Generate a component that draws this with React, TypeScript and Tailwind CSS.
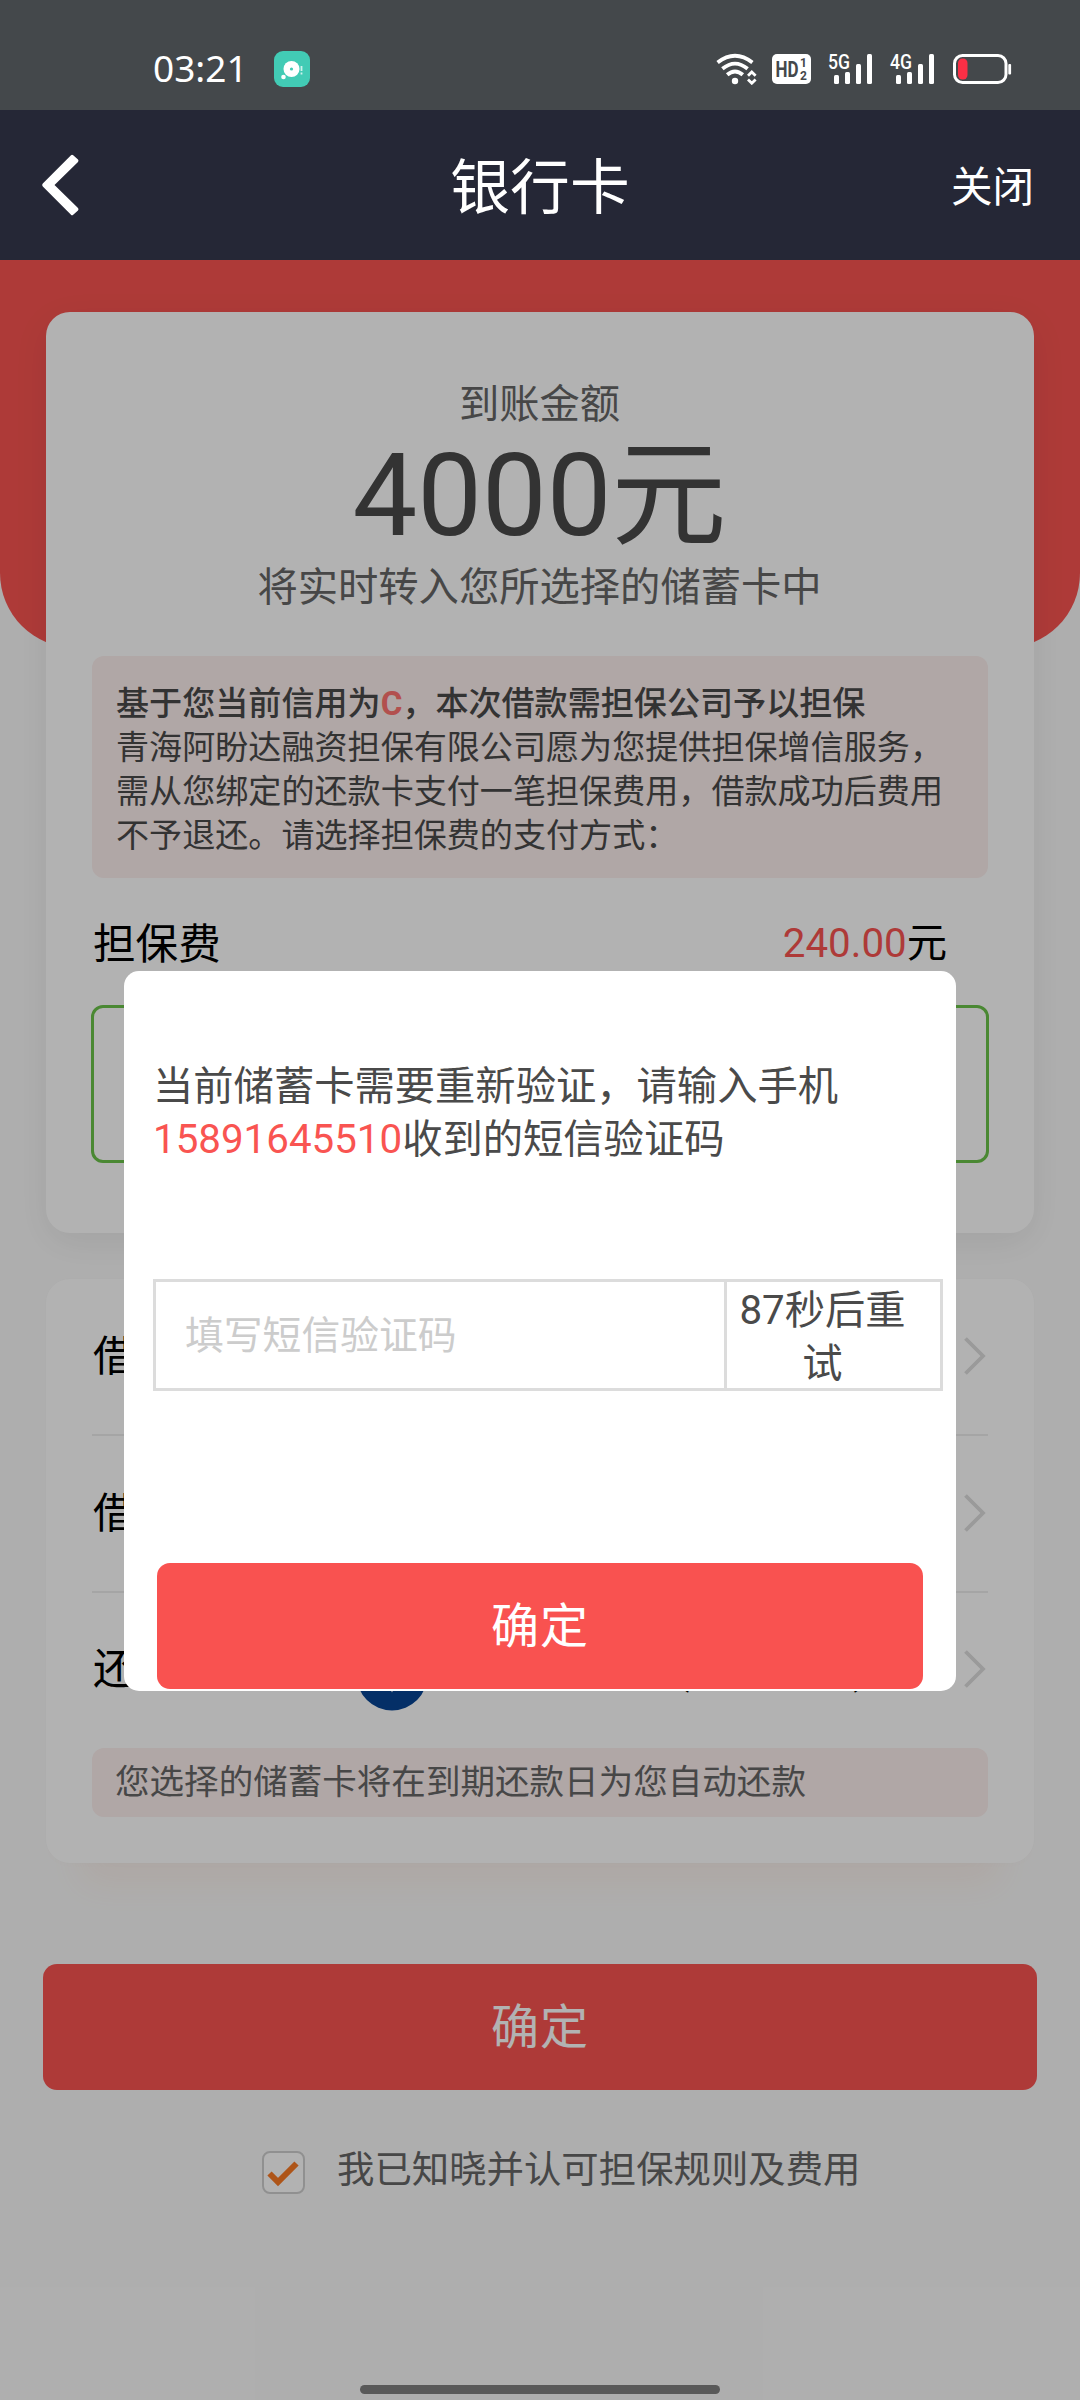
import { type ReactNode } from 'react';
import clsx from 'clsx';

const FONT = "font-['Roboto','Noto_Sans_CJK_SC',sans-serif]";

const PHONE = '15891645510';

const NOTICE_LINES = [
  '青海阿盼达融资担保有限公司愿为您提供担保增信服务，',
  '需从您绑定的还款卡支付一笔担保费用，借款成功后费用',
  '不予退还。请选择担保费的支付方式：',
];

const WifiIcon = () => (
  <svg viewBox="0 0 41 32" className="w-[41px] h-[32px]" fill="none" aria-hidden="true">
    <g stroke="#fff" strokeWidth="3.8">
      <path d="M1.6 9.6 Q19 -4 36.4 9.6" />
      <path d="M6.4 15.8 Q19 5.4 31.6 15.8" />
      <path d="M11.2 21.8 Q19 15 26.8 21.8" />
    </g>
    <circle cx="19" cy="28" r="3.2" fill="#fff" />
    <path d="M32 22.8 L35.8 19 L39.6 22.8 M32 26.4 L35.8 30.2 L39.6 26.4" stroke="#fff" strokeWidth="2.8" />
  </svg>
);

const HdIcon = () => (
  <svg viewBox="0 0 39 30" className="w-[39px] h-[30px]" aria-hidden="true">
    <rect width="39" height="30" rx="5" fill="#fff" />
    <g fill="#44484b" className="font-['Roboto',sans-serif] font-bold">
      <text transform="translate(3.6 23) scale(0.79 1)" fontSize="21.5">HD</text>
      <text x="28" y="13" fontSize="12">1</text>
      <text x="28" y="26.2" fontSize="12">2</text>
    </g>
  </svg>
);

const SignalIcon = ({ label }: { label: string }) => (
  <svg viewBox="-2 -6 48 42" className="w-[48px] h-[42px]" fill="#fff" aria-hidden="true">
    <text
      x="0"
      y="15"
      fontSize="20"
      textLength="22"
      lengthAdjust="spacingAndGlyphs"
      className="font-['Roboto',sans-serif] font-medium"
    >
      {label}
    </text>
    <rect x="6" y="21" width="5" height="9" rx="1.5" />
    <rect x="17" y="18" width="5" height="12" rx="1.5" />
    <rect x="28" y="10" width="5" height="20" rx="1.5" />
    <rect x="39" y="0" width="5" height="30" rx="1.5" />
  </svg>
);

const BatteryIcon = () => (
  <svg viewBox="0 0 59 30" className="w-[59px] h-[30px]" fill="none" aria-hidden="true">
    <rect x="1.5" y="1.5" width="51.5" height="27" rx="8" stroke="#fff" strokeWidth="3" />
    <rect x="5" y="4.5" width="9.5" height="21" rx="4.5" fill="#fa2f45" />
    <rect x="55.3" y="10" width="2.8" height="10.5" rx="1" fill="#fff" />
  </svg>
);

const ChevronRight = () => (
  <svg viewBox="0 0 24 42" className="w-6 h-[42px]" fill="none" aria-hidden="true">
    <path d="M1.5 2.5 L19 20 L1.5 37.5" stroke="#dddddd" strokeWidth="3.8" />
  </svg>
);

function StatusBar() {
  return (
    <div className="flex items-center h-[110px] pt-7 pl-[153px] pr-[68px] bg-[#44484b] text-white shrink-0">
      <span className="w-[121px] pb-[4px] font-['Noto_Sans',sans-serif] text-[37px] leading-none">03:21</span>
      <svg viewBox="0 0 36 36" className="size-9" aria-hidden="true">
        <rect width="36" height="36" rx="9" fill="#42cbb5" />
        <circle cx="17.5" cy="18" r="8" fill="#fff" />
        <circle cx="17.5" cy="18" r="1.6" fill="#42cbb5" />
        <circle cx="9.5" cy="26" r="2.3" fill="#fff" />
        <path d="M27.5 15 V20 M27.5 21.5 V23.5" stroke="#fff" strokeOpacity="0.75" strokeWidth="1.8" />
      </svg>
      <div className="flex items-center ml-auto">
        <WifiIcon />
        <div className="ml-[15px]"><HdIcon /></div>
        <div className="ml-[15px]"><SignalIcon label="5G" /></div>
        <div className="ml-[14px]"><SignalIcon label="4G" /></div>
        <div className="ml-[17px]"><BatteryIcon /></div>
      </div>
    </div>
  );
}

function Header() {
  return (
    <header className="flex items-center justify-between h-[150px] pl-[41px] pr-[46px] bg-[#252736] text-white shrink-0">
      <button type="button" aria-label="返回" className="w-[85px]">
        <svg viewBox="0 0 40 64" className="w-10 h-16" fill="none" aria-hidden="true">
          <path
            d="M30 2.2 Q31 1.2 32.2 2.2 L37 6.6 Q38 7.8 37 9 L13.5 32 L37 55 Q38 56.2 37 57.4 L32.2 61.8 Q31 62.8 30 61.8 L1.8 33.6 Q0.4 32 1.8 30.4 Z"
            fill="#fff"
          />
        </svg>
      </button>
      <h1 className="text-[59.8px] leading-[72px] pt-[7px] pl-[5px]">银行卡</h1>
      <button type="button" className="w-[85px] pt-[5px] text-[41.5px] leading-[50px] text-right">关闭</button>
    </header>
  );
}

function Row({ label, last, children }: { label: string; last?: boolean; children?: ReactNode }) {
  return (
    <div
      className={clsx(
        'flex items-center text-[42.6px] text-black',
        last ? 'h-[155px] pb-px' : 'h-[157px] border-b-2 border-[#ededed]'
      )}
    >
      <span className="w-[265px] pl-px">{label}</span>
      {children}
      <div className="ml-auto"><ChevronRight /></div>
    </div>
  );
}

function VerifyDialog() {
  return (
    <div role="dialog" className="flex flex-col w-[832px] h-[720px] pt-[89px] rounded-[15px] bg-white">
      <p className="px-[29px] text-[40.3px] leading-[53px] text-[#4a4a4a]">
        当前储蓄卡需要重新验证，请输入手机
        <br />
        <span className="text-[#f95451]">{PHONE}</span>收到的短信验证码
      </p>
      <div className="flex ml-[29px] mt-[113px] w-[790px] h-[112px] border-[3px] border-[#dcdcdc] shrink-0">
        <div className="flex items-center w-[568px] pt-[3px] pl-[29px] text-[38.8px] text-[#cccccc]">填写短信验证码</div>
        <div className="flex-1 border-l-[3px] border-[#dcdcdc] pl-[5px] pr-[27px] pt-[3px] text-center text-[40.3px] leading-[52.5px] text-[#4a4a4a]">
          87秒后重
          <br />试
        </div>
      </div>
      <button
        type="button"
        className="mt-[172px] mx-[33px] pt-px h-[126px] rounded-[13px] bg-[#f95250] text-[48px] tracking-[1px] text-white"
      >
        确定
      </button>
    </div>
  );
}

export default function App() {
  return (
    <div className={clsx(FONT, 'relative flex flex-col w-[1080px] h-[2400px] overflow-hidden bg-[#fafafa]')}>
      <StatusBar />
      <Header />

      <main className="relative flex flex-col flex-1 pt-[52px] pb-[6px]">
        {/* red backdrop behind the first card */}
        <div className="absolute inset-x-0 top-0 h-[388px] rounded-b-[75px] bg-[#f95451]" />

        <section className="relative mx-[46px] h-[921px] pt-[67px] pl-[46px] pr-[46px] rounded-[24px] bg-white shadow-[0_10px_36px_rgba(0,0,0,0.07)] shrink-0">
          <div className="pr-px text-center text-[#666666]">
            <p className="text-[40.3px] leading-[52px]">到账金额</p>
            <p className="pt-1 text-[115.2px] leading-[122px] text-[#4a4a4a]">4000元</p>
            <p className="mt-[5px] text-[40.3px] leading-[52px]">将实时转入您所选择的储蓄卡中</p>
          </div>

          <div className="mt-[42px] h-[222px] pt-[26px] px-6 rounded-[12px] bg-[#fdefee] text-[33.1px] leading-[44px] text-[#4a4a4a]">
            <p className="font-medium">
              基于您当前信用为<span className="font-bold text-[#ff7370]">C</span>，本次借款需担保公司予以担保
            </p>
            {NOTICE_LINES.map((line) => (
              <p key={line} className="-mr-6 whitespace-nowrap">{line}</p>
            ))}
          </div>

          <div className="flex items-center justify-between mt-[41px] pl-px pr-[41px] h-[50px] leading-[50px] text-black">
            <span className="text-[42.6px]">担保费</span>
            <span className="text-[40.3px]">
              <span className="text-[#f95451]">240.00</span>元
            </span>
          </div>

          <div className="mt-9 -mx-px h-[158px] rounded-[12px] border-[3px] border-[#6bc34a]" />
        </section>

        <section className="relative mx-[46px] mt-[46px] h-[584px] px-[46px] rounded-[24px] bg-white shadow-[0_0_10px_rgba(0,0,0,0.02),0_56px_36px_-34px_rgba(240,140,90,0.09)] shrink-0">
          <Row label="借款" />
          <Row label="借款" />
          <Row label="还款" last>
            <svg viewBox="0 0 72 72" className="mt-[10px] -ml-px size-[72px]" aria-hidden="true">
              <circle cx="36" cy="36" r="35.5" fill="#064494" />
              <path d="M33 48 L39 48 L36 53.5 Z" fill="#fff" />
            </svg>
            <div className="flex justify-between ml-[247px] w-[193px] pb-[3px]">
              <span>(</span>
              <span>)</span>
            </div>
          </Row>
          <p className="h-[69px] px-[23px] rounded-[12px] bg-[#fdefee] text-[34.55px] leading-[68px] text-[#666666]">
            您选择的储蓄卡将在到期还款日为您自动还款
          </p>
        </section>

        <button
          type="button"
          className="relative mx-[43px] mt-[101px] pt-px h-[126px] rounded-[14px] bg-[#f95451] text-[48px] tracking-[1px] text-white shrink-0"
        >
          确定
        </button>

        <div className="flex items-center mt-[61px] pl-[262px] h-[43px]">
          <svg viewBox="0 0 43 43" className="size-[43px]" fill="none" aria-hidden="true">
            <rect x="1" y="1" width="41" height="41" rx="7" fill="#fff" stroke="#cfcfcf" strokeWidth="2" />
            <path d="M7.5 22.5 L16 31 L34.5 12.5" stroke="#f97a25" strokeWidth="6" />
          </svg>
          <span className="ml-8 mb-1 text-[37.4px] text-[#666666]">我已知晓并认可担保规则及费用</span>
        </div>

        <div className="mt-auto mx-auto w-[360px] h-[9px] rounded-full bg-[#808080]" />

        {/* dimmed layer and dialog */}
        <div className="absolute inset-0 flex items-start justify-center pt-[711px] bg-black/30">
          <VerifyDialog />
        </div>
      </main>
    </div>
  );
}
